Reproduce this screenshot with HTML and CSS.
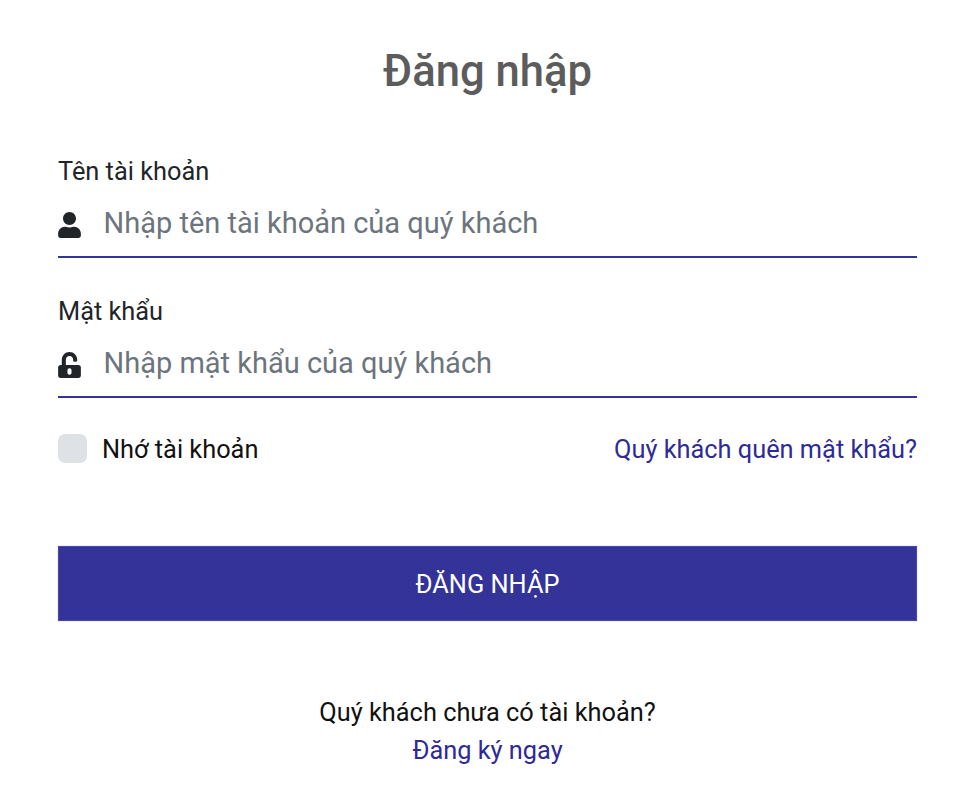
FILE: index.html

```html
<!DOCTYPE html>
<html lang="vi">
<head>
  <meta charset="UTF-8" />
  <title>Đăng nhập</title>
  <link rel="stylesheet" href="styles.css">
</head>
<body>
  <form class="login">
    <h1>Đăng nhập</h1>

    <div class="field">
      <label for="user">Tên tài khoản</label>
      <div class="input-row">
        <svg class="icon" viewBox="0 0 448 512"><path d="M224 256c70.700 0 128-57.300 128-128S294.700 0 224 0 96 57.300 96 128s57.300 128 128 128zm89.600 32h-16.700c-22.200 10.200-46.900 16-72.900 16s-50.600-5.800-72.900-16h-16.700C60.200 288 0 348.200 0 422.400V464c0 26.500 21.500 48 48 48h352c26.500 0 48-21.500 48-48v-41.600c0-74.200-60.200-134.400-134.400-134.400z"/></svg>
        <input id="user" type="text" placeholder="Nhập tên tài khoản của quý khách">
      </div>
    </div>

    <div class="field">
      <label for="pass">Mật khẩu</label>
      <div class="input-row">
        <svg class="icon" viewBox="0 0 448 512"><path d="M400 256H152V152.900c0-39.600 31.700-72.500 71.300-72.900 40-.4 72.700 32.100 72.700 72v16c0 13.300 10.700 24 24 24h32c13.300 0 24-10.700 24-24v-16C376 68 307.500-.3 223.500 0 139.500.3 72 69.500 72 153.500V256H48c-26.500 0-48 21.500-48 48v160c0 26.500 21.500 48 48 48h352c26.500 0 48-21.500 48-48V304c0-26.500-21.500-48-48-48zM264 408c0 22.100-17.900 40-40 40s-40-17.900-40-40v-48c0-22.100 17.900-40 40-40s40 17.900 40 40v48z"/></svg>
        <input id="pass" type="password" placeholder="Nhập mật khẩu của quý khách">
      </div>
    </div>

    <div class="options">
      <label class="remember"><span class="check"></span>Nhớ tài khoản</label>
      <a href="#">Quý khách quên mật khẩu?</a>
    </div>

    <button type="button" class="submit">ĐĂNG NHẬP</button>

    <div class="register">
      <div>Quý khách chưa có tài khoản?</div>
      <a href="#">Đăng ký ngay</a>
    </div>
  </form>
</body>
</html>
```

FILE: styles.css

```css
body {
  margin: 0;
  font-family: Roboto, sans-serif;
  background: #fff;
  color: #212529;
}
.login {
  padding: 45px 63px 0 58px;
}
h1 {
  margin: 0 0 54px;
  text-align: center;
  font-size: 43.6px;
  line-height: 54px;
  font-weight: 500;
  color: #5c5c5c;
}
.field {
  margin-bottom: 35px;
}
.field label {
  display: block;
  font-size: 25.35px;
  line-height: 36px;
}
.input-row {
  display: flex;
  align-items: center;
  height: 69px;
  border-bottom: 2px solid #333399;
  box-sizing: border-box;
}
.icon {
  width: 23px;
  height: 26px;
  fill: #212529;
  flex: none;
  margin: 4px 22.500px 0 0;
}
.input-row input {
  flex: 1;
  border: none;
  outline: none;
  padding: 0;
  font: 29px Roboto, sans-serif;
  color: #212529;
  background: transparent;
}
.input-row input::placeholder {
  color: #6c757d;
  opacity: 1;
}
.options {
  display: flex;
  justify-content: space-between;
  align-items: center;
  height: 32px;
  font-size: 25.35px;
}
.remember {
  display: flex;
  align-items: center;
  color: #111;
}
.check {
  width: 29px;
  height: 29px;
  margin: -2px 15px 0 0;
  border-radius: 7px;
  background: #dee2e6;
}
a {
  color: #2e2a96;
  text-decoration: none;
}
.submit {
  display: block;
  width: 100%;
  height: 75px;
  margin-top: 81px;
  border: 1px solid #4a48ac;
  background: #333399;
  color: #fff;
  font: 25.35px Roboto, sans-serif;
  box-shadow: 0 0 0 1px #eeeef8;
}
.register {
  margin-top: 72px;
  text-align: center;
  font-size: 25.35px;
  line-height: 38px;
  color: #111;
}
```
